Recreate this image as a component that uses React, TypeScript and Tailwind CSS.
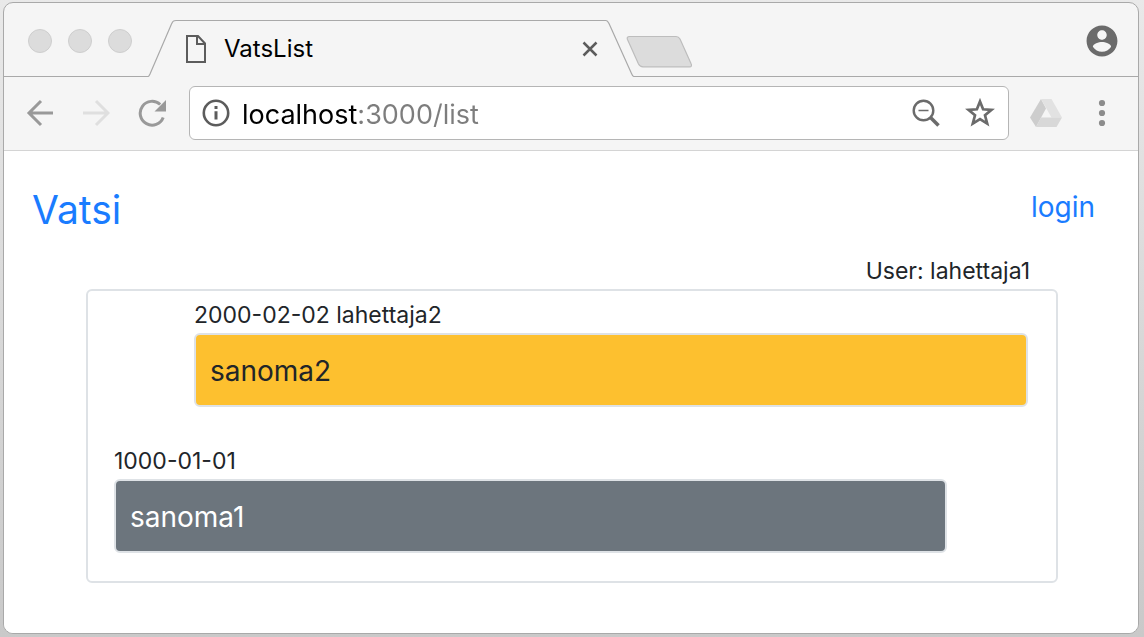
import React from "react";

type Message = {
  date: string;
  sender?: string;
  text: string;
  own: boolean;
};

const messages: Message[] = [
  { date: "2000-02-02", sender: "lahettaja2", text: "sanoma2", own: false },
  { date: "1000-01-01", text: "sanoma1", own: true },
];

function TabStrip() {
  return (
    <div className="flex h-[74px] items-stretch">
      <div className="flex w-[144px] shrink-0 items-start gap-4 border-b border-[#a9a9a9] pt-[26px] pl-6">
        {["Close", "Minimize", "Zoom"].map((name) => (
          <button
            key={name}
            aria-label={name}
            className="size-6 shrink-0 rounded-full border border-[#cecece] bg-[#dcdcdc]"
          />
        ))}
      </div>
      <svg className="h-[74px] w-[28px] shrink-0" viewBox="0 0 28 74" fill="none" stroke="#a9a9a9" strokeWidth="1.2">
        <path d="M0 73.5 C1 73.5 1.3 72.5 2 71 L23.500 21 C25 18 25.500 17.500 28 17.500" />
      </svg>
      <div className="mt-[17px] flex w-[430px] min-w-0 items-center border-t border-[#a9a9a9] pr-1 pl-[10px]">
        <svg className="h-7 w-5 shrink-0" viewBox="0 0 20 28" fill="none" stroke="#5c5c5c" strokeWidth="2">
          <path d="M1 1 H12 L19 8.500 V27 H1 Z" />
          <path d="M11 1 V9 H19" />
        </svg>
        <span className="ml-[18px] grow truncate text-2xl text-black">VatsList</span>
        <button aria-label="Close tab" className="flex size-6 shrink-0 items-center justify-center">
          <svg className="size-4" viewBox="0 0 16 16" stroke="#5c5c5c" strokeWidth="2.500">
            <path d="M1.500 1.500 L14.500 14.500 M14.500 1.500 L1.500 14.500" />
          </svg>
        </button>
      </div>
      <svg className="h-[74px] w-[28px] shrink-0" viewBox="0 0 28 74" fill="none" stroke="#a9a9a9" strokeWidth="1.2">
        <path d="M0 17.500 C1.500 17.500 2 18.500 3 20.500 L25.500 70.500 C26.500 73 27 73.500 28 73.500" />
      </svg>
      <div className="flex grow items-start justify-between border-b border-[#a9a9a9] pr-[18px]">
        <button aria-label="New tab" className="-ml-2 pt-8">
          <svg className="h-[34px] w-[66px]" viewBox="0 0 66 34" fill="#dcdcdc" stroke="#bdbdbd" strokeWidth="1.200">
            <path d="M3.500 1.500 H50 C52 1.500 53 2.200 54 4 L65 28.500 C66 30.500 65.500 31.800 63.500 31.800 H17 C14.500 31.800 13.500 31 12.500 29 L1.500 4.500 C0.800 2.500 1.500 1.500 3.500 1.500 Z" />
          </svg>
        </button>
        <button aria-label="Profile" className="pt-5">
          <svg className="size-9" viewBox="0 0 24 24" fill="#6b6b6b">
            <path d="M12 1.700C6.300 1.700 1.700 6.300 1.700 12s4.600 10.300 10.300 10.300 10.300-4.600 10.300-10.300S17.700 1.700 12 1.700zm0 3.100c1.750 0 3.150 1.400 3.150 3.150s-1.400 3.150-3.150 3.150-3.150-1.400-3.150-3.150 1.400-3.150 3.150-3.150zm0 14.400c-2.500 0-4.810-1.280-6.100-3.320.030-2.200 4-3.280 6.100-3.280 2.090 0 6.070 1.080 6.100 3.280-1.290 2.040-3.600 3.320-6.100 3.320z" />
          </svg>
        </button>
      </div>
    </div>
  );
}

function Toolbar() {
  return (
    <div className="flex h-[74px] items-center border-b border-[#d4d4d4] pr-[22px] pb-0.5 pl-[22px]">
      <button aria-label="Back" className="shrink-0">
        <svg className="size-7" viewBox="0 0 28 28" fill="none" stroke="#999999" strokeWidth="3">
          <path d="M27 14 H3 M15 2 L3 14 L15 26" />
        </svg>
      </button>
      <button aria-label="Forward" className="ml-7 shrink-0">
        <svg className="size-7" viewBox="0 0 28 28" fill="none" stroke="#dfdfdf" strokeWidth="3">
          <path d="M1 14 H25.500 M14 2 L26 14 L14 26" />
        </svg>
      </button>
      <button aria-label="Reload" className="ml-7 shrink-0">
        <svg className="size-7" viewBox="0 0 28 28">
          <path d="M25.200 18.500 A11.900 11.900 0 1 1 22.200 5.500" fill="none" stroke="#999999" strokeWidth="3" />
          <path d="M28 1 V12.500 H16.500 Z" fill="#999999" />
        </svg>
      </button>
      <div className="ml-[23px] flex h-[54px] min-w-0 grow items-center rounded-md border border-[#b5b5b5] bg-white pr-3 pl-3">
        <svg className="size-7 shrink-0" viewBox="0 0 28 28">
          <circle cx="14" cy="14" r="12.200" fill="none" stroke="#5c5c5c" strokeWidth="2.600" />
          <path d="M12.500 7 H15.500 V10 H12.500 Z M12.500 12.300 H15.500 V20.500 H12.500 Z" fill="#5c5c5c" />
        </svg>
        <input
          aria-label="Address"
          defaultValue="localhost:3000/list"
          className="ml-3 min-w-0 grow bg-[linear-gradient(to_right,#000_117px,#7d7d7d_117px)] bg-clip-text pt-1.5 text-[27px] text-transparent caret-black outline-none"
        />
        <button aria-label="Zoom out" className="shrink-0">
          <svg className="size-7" viewBox="0 0 28 28" fill="none" stroke="#6b6b6b">
            <circle cx="11.500" cy="11.500" r="9.800" strokeWidth="2.400" />
            <path d="M6.500 11.500 H16.500" strokeWidth="1.600" />
            <path d="M18.500 18.500 L26.500 26.500" strokeWidth="3.600" />
          </svg>
        </button>
        <button aria-label="Bookmark" className="ml-6 shrink-0">
          <svg className="size-8" viewBox="0 0 32 32" fill="none" stroke="#6b6b6b" strokeWidth="2.700">
            <path d="M16 4.500 L19.100 12.300 L27.500 12.900 L21 18.300 L23.200 26.600 L16 22 L8.800 26.600 L11 18.300 L4.500 12.900 L12.900 12.300 Z" />
          </svg>
        </button>
      </div>
      <button aria-label="Drive" className="ml-[21px] shrink-0">
        <svg className="h-7 w-8" viewBox="0 0 32 28">
          <path d="M11 0 L16 9.500 L6 28 L0 18.500 Z" fill="#cdcdcd" />
          <path d="M11 0 H21.500 L32 18.500 H21.500 Z" fill="#e2e2e2" />
          <path d="M11 18.500 H32 L26.500 28 H6 Z" fill="#d8d8d8" />
        </svg>
      </button>
      <button aria-label="Menu" className="ml-[26px] shrink-0">
        <svg className="h-7 w-[28px]" viewBox="0 0 28 28" fill="#8c8c8c">
          <circle cx="14" cy="4" r="3.100" />
          <circle cx="14" cy="14" r="3.100" />
          <circle cx="14" cy="24" r="3.100" />
        </svg>
      </button>
    </div>
  );
}

function MessageItem({ message }: { message: Message }) {
  return (
    <li className={message.own ? "mr-[109px] ml-[26px]" : "mr-7 ml-[106px]"}>
      <div className="text-[23px] leading-9">
        {message.date}
        {message.sender ? ` ${message.sender}` : ""}
      </div>
      <div
        className={`rounded-md border-2 border-[#dee2e6] px-[14px] pt-[17px] pb-[15px] text-[28px] leading-[38px] ${
          message.own ? "bg-[#6c757d] text-white" : "bg-[#fdc02f]"
        }`}
      >
        {message.text}
      </div>
    </li>
  );
}

export default function App() {
  return (
    <div className="flex min-h-screen bg-[#dcdcdc] bg-linear-to-b from-[#e9e9e9] to-[#c9c9c9] pt-0.5 pr-[5px] pb-[3px] pl-[3px] font-['Inter','Liberation_Sans',sans-serif]">
      <div className="flex min-w-0 grow flex-col overflow-hidden rounded-[10px] border border-[#a9a9a9] bg-[#f5f5f5]">
        <TabStrip />
        <Toolbar />
        <main className="grow bg-white text-[#212529]">
          <header className="flex items-start justify-between pt-[34px] pr-[43px] pl-7">
            <a href="#" className="text-[39px] leading-[50px] text-[#1a7cff]">
              Vatsi
            </a>
            <a href="#" className="text-[28px] leading-[44px] text-[#1a7cff]">
              login
            </a>
          </header>
          <section className="mr-20 ml-[82px] pt-[18px]">
            <p className="pr-7 text-right text-[23px] leading-9">User: lahettaja1</p>
            <ul className="flex flex-col gap-9 rounded-md border-2 border-[#dee2e6] pt-1.5 pb-7">
              {messages.map((message) => (
                <MessageItem key={message.date} message={message} />
              ))}
            </ul>
          </section>
        </main>
      </div>
    </div>
  );
}
